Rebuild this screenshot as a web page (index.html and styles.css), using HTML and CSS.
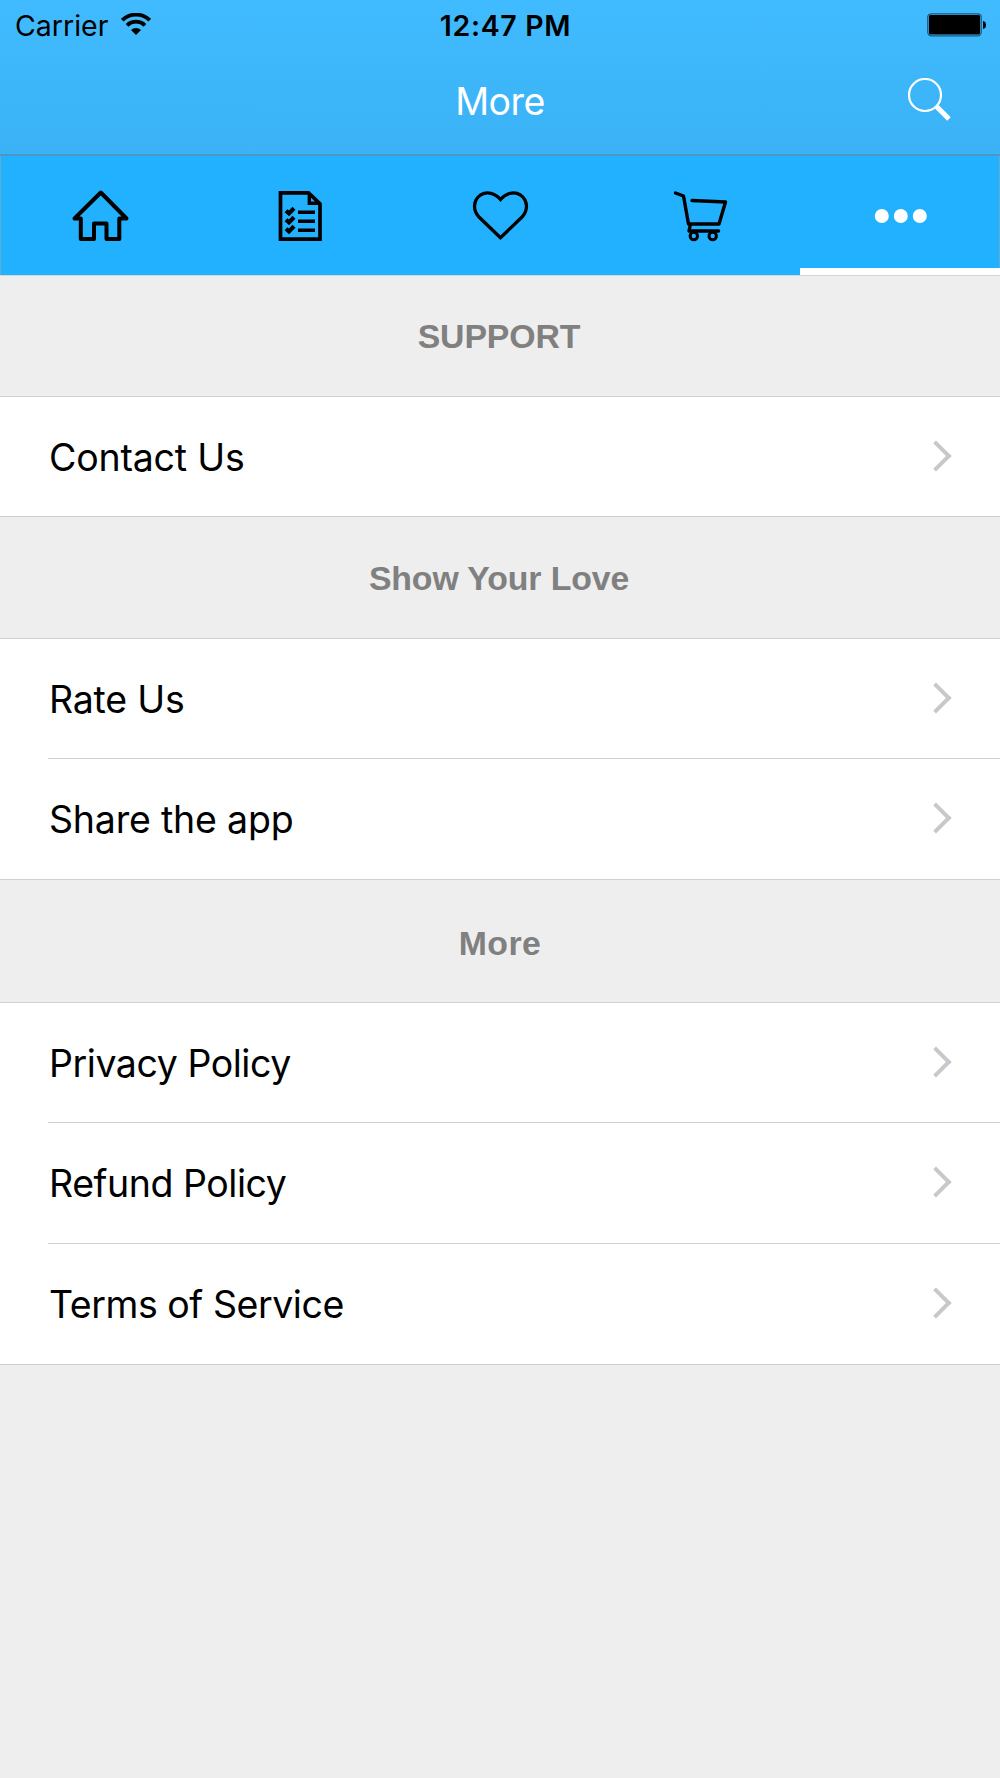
FILE: index.html
```html
<!DOCTYPE html>
<html lang="en">
<head>
    <meta charset="UTF-8">
    <meta name="viewport" content="width=device-width, initial-scale=1.0">
    <title>More</title>
    <link rel="stylesheet" href="styles.css">
</head>
<body>
    <header>
        <div class="status-bar">
            <div class="carrier">
                <span>Carrier</span>
                <svg class="wifi" viewBox="0 0 30 22" width="30" height="22">
                    <path d="M1.3 7.2a19.5 19.5 0 0 1 27.4 0M6 12.3a13 13 0 0 1 18 0" fill="none" stroke="#000" stroke-width="3.8"/>
                    <path d="M10 17a7.2 7.2 0 0 1 10 0l-5 5z"/>
                </svg>
            </div>
            <div class="time">12:47 PM</div>
            <svg class="battery" viewBox="0 0 60 24" width="60" height="24">
                <rect x="0.8" y="0.8" width="53.4" height="22" rx="3.5" fill="none" stroke="#1b5878" stroke-width="1.3"/>
                <rect x="2" y="2" width="51" height="19.6" rx="1.5"/>
                <path d="M56 8q3 .6 3 4t-3 4z"/>
            </svg>
        </div>
        <div class="title-bar">
            <h1>More</h1>
            <svg class="search" viewBox="0 0 44 44" width="44" height="44">
                <circle cx="17" cy="17" r="16" fill="none" stroke="#fff" stroke-width="2.2"/>
                <path d="M28 28L41 41" stroke="#fff" stroke-width="5"/>
            </svg>
        </div>
    </header>

    <nav class="tabs">
        <a class="tab">
            <svg viewBox="0 0 60 60" width="60" height="60">
                <path d="M30.8 6.5L4.5 32.5H10.8V53H24V37.5H36.5V53H49.3V32.5H56.5z" fill="none" stroke="#000" stroke-width="4" stroke-linejoin="round"/>
            </svg>
        </a>
        <a class="tab">
            <svg viewBox="0 0 60 60" width="60" height="60">
                <path d="M10.5 6.9H38.500L50 17.700V53.200H10.500z" fill="none" stroke="#000" stroke-width="3.700"/>
                <path d="M39.300 7V17.300H50" fill="none" stroke="#000" stroke-width="3.400"/>
                <path d="M28 26.200H45M28 35.200H45M28 44.200H45" stroke="#000" stroke-width="3.600"/>
                <path d="M16 24.700l3 2.700 5-5.200M16 33.700l3 2.700 5-5.200M16 42.700l3 2.700 5-5.200" fill="none" stroke="#000" stroke-width="4.200"/>
            </svg>
        </a>
        <a class="tab">
            <svg viewBox="0 0 60 60" width="60" height="60">
                <path d="M30.500 51.800L8.500 30.500C2.500 23.500 3.500 14 10.500 9C17 5 25 7 30.500 13.500C36 7 44 5 50.500 9C57.500 14 58.500 23.500 52.500 30.500z" fill="none" stroke="#000" stroke-width="3.300"/>
            </svg>
        </a>
        <a class="tab">
            <svg viewBox="0 0 60 60" width="60" height="60">
                <path d="M5.500 7L13.500 10L18.500 38H49L55.500 16L22 14.500M20.500 38L19 45H48.500" fill="none" stroke="#000" stroke-width="3.400" stroke-linecap="round" stroke-linejoin="round"/>
                <circle cx="23.800" cy="50" r="3.700" fill="none" stroke="#000" stroke-width="3"/>
                <circle cx="42.700" cy="50" r="3.700" fill="none" stroke="#000" stroke-width="3"/>
            </svg>
        </a>
        <a class="tab active">
            <svg viewBox="0 0 60 60" width="60" height="60" fill="#fff">
                <circle cx="11.800" cy="30" r="7"/>
                <circle cx="30.800" cy="30" r="7"/>
                <circle cx="49.800" cy="30" r="7"/>
            </svg>
        </a>
    </nav>

    <main>
        <h2>SUPPORT</h2>
        <ul>
            <li><span>Contact Us</span></li>
        </ul>

        <h2>Show Your Love</h2>
        <ul>
            <li><span>Rate Us</span></li>
            <li><span>Share the app</span></li>
        </ul>

        <h2 class="tall">More</h2>
        <ul class="policies">
            <li><span>Privacy Policy</span></li>
            <li><span>Refund Policy</span></li>
            <li><span>Terms of Service</span></li>
        </ul>
    </main>
</body>
</html>
```

FILE: styles.css
```css
:root {
    --blue: #22b1ff;
    --gray: #eeeeee;
    --line: #d0d0d4;
}

*, *::after {
    box-sizing: border-box;
}

body {
    margin: 0;
    min-height: 1778px;
    background-color: var(--gray);
    font-family: Inter, "Liberation Sans", sans-serif;
    color: #000;
}

header {
    height: 156px;
    background: linear-gradient(#41bbff, #3ab2f5);
    border-bottom: 2px solid #4c97c3;
}

.status-bar {
    display: grid;
    grid-template-columns: 1fr auto 1fr;
    align-items: center;
    height: 50px;
    padding: 0 13px 0 15px;
    font-size: 28.5px;
}

.carrier {
    display: flex;
    align-items: center;
    gap: 13px;
}

.wifi {
    margin-bottom: 2px;
}

.time {
    padding-left: 9px;
    font-weight: 600;
    letter-spacing: 0.65px;
}

.battery {
    justify-self: end;
}

.title-bar {
    display: grid;
    grid-template-columns: 1fr auto 1fr;
    align-items: center;
    height: 104px;
    padding: 0 48px 2px;
}

h1 {
    grid-column: 2;
    margin: 0;
    font-size: 37.5px;
    font-weight: 400;
    letter-spacing: -0.5px;
    color: #fff;
}

.search {
    justify-self: end;
    margin-bottom: 3px;
}

.tabs {
    display: grid;
    grid-template-columns: repeat(5, 1fr);
    height: 120px;
    background-color: var(--blue);
    border-bottom: 1px solid #cfd8dd;
    box-shadow: inset 1px 0 #62abd4, inset -1px 0 #62abd4;
}

.tab {
    display: flex;
    align-items: center;
    justify-content: center;
}

.tab.active {
    border-bottom: 7px solid #fff;
    padding-top: 7px;
}

h2 {
    display: flex;
    align-items: center;
    justify-content: center;
    height: 120px;
    margin: 0;
    padding-right: 2px;
    font-family: "Liberation Sans", Arial, sans-serif;
    font-size: 33.8px;
    font-weight: bold;
    letter-spacing: -0.1px;
    color: #808080;
}

ul + h2 {
    height: 121px;
    padding-top: 1px;
}

h2.tall {
    height: 122px;
    padding: 4px 0 0;
    letter-spacing: 0.5px;
}

ul {
    margin: 0;
    padding: 0;
    list-style: none;
    background-color: #fff;
    border-top: 1px solid var(--line);
    border-bottom: 1px solid var(--line);
}

li {
    display: flex;
    align-items: center;
    justify-content: space-between;
    height: 121px;
    margin-left: 48px;
    padding: 1px 53px 0 1px;
    font-size: 37.5px;
    letter-spacing: -0.2px;
}

li:first-child {
    height: 119px;
    padding-top: 2px;
}

li + li {
    border-top: 1px solid var(--line);
}

.policies li {
    letter-spacing: -0.45px;
}

/* disclosure arrow */
li::after {
    content: "";
    width: 22px;
    height: 22px;
    margin-bottom: 4px;
    border-top: 4.5px solid #c7c7cc;
    border-right: 4.5px solid #c7c7cc;
    transform: rotate(45deg);
}
```
